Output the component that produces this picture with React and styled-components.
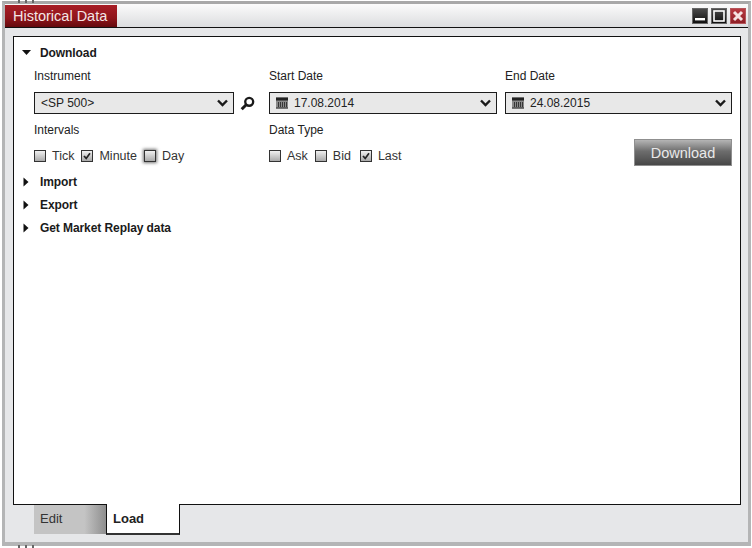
import React from "react";
import styled, { createGlobalStyle } from "styled-components";

const GlobalStyle = createGlobalStyle`
    html, body {
        margin: 0;
        padding: 0;
        background: #ffffff;
    }
    body {
        font-family: "Liberation Sans", Arial, sans-serif;
        color: #222222;
    }
`;

const Page = styled.div`
    position: relative;
    width: 752px;
    height: 548px;
    overflow: hidden;
    padding: 1px 1px 2px 2px;
    box-sizing: border-box;
`;

const Ticks = styled.div`
    position: absolute;
    left: 18px;
    ${(props) => (props.$bottom ? "bottom: 0;" : "top: 0;")}
    width: 16px;
    height: 3px;
    background: repeating-linear-gradient(90deg, #666666 0 2px, transparent 2px 7px);
`;

const Frame = styled.div`
    height: 100%;
    box-sizing: border-box;
    border-style: solid;
    border-color: #b4b5b6;
    border-width: 3px 3px 4px 3px;
    border-top-color: #a8a8a8;
    background: #e6e7e9;
    display: flex;
    flex-direction: column;
`;

const TitleBar = styled.div`
    height: 24px;
    flex: none;
    box-sizing: border-box;
    display: flex;
    align-items: stretch;
    justify-content: space-between;
    background: linear-gradient(#fbfbfb, #dcdddf);
    border-bottom: 1px solid #111111;
`;

const TitleTab = styled.div`
    width: 112px;
    margin-top: 1px;
    display: flex;
    align-items: center;
    padding: 0 0 1px 8px;
    box-sizing: border-box;
    background: linear-gradient(#a81e26, #8f151b 60%, #650a0e);
    color: #f4e6e6;
    font-size: 14.5px;
`;

const WindowButtons = styled.div`
    display: flex;
    gap: 3px;
    padding: 4px 2px 0 0;
`;

const WindowButton = styled.div`
    width: 16px;
    height: 16px;
    box-sizing: border-box;
    border: 1px solid ${(props) => (props.$close ? "#b5555a" : "#666666")};
    background: ${(props) =>
        props.$close
            ? "linear-gradient(#b83a42, #8f1f26)"
            : "linear-gradient(#4a4a4a, #0f0f0f)"};
    display: flex;
    align-items: center;
    justify-content: center;
`;

const Panel = styled.div`
    flex: 1;
    margin: 8px 7px 0 8px;
    border: 1px solid #111111;
    background: #ffffff;
    padding: 4px 8px 0 8px;
    display: flex;
    flex-direction: column;
`;

const SectionHeader = styled.div`
    height: 23px;
    display: flex;
    align-items: center;
    gap: 9px;
    font-size: 12px;
    font-weight: bold;
    letter-spacing: -0.08px;
    color: #1a1a1a;
`;

const Arrow = styled.svg`
    width: 9px;
    height: 10px;
    flex: none;
`;

const FormGrid = styled.div`
    display: grid;
    grid-template-columns: 227px 228px 227px;
    grid-template-rows: 16px 22px 18px 16px;
    column-gap: 8px;
    row-gap: 8px;
    padding: 0 0 6px 12px;
    margin-top: 4px;
`;

const FieldLabel = styled.div`
    font-size: 12px;
    line-height: 16px;
    color: #222222;
`;

const SelectRow = styled.div`
    display: flex;
    align-items: center;
    gap: 6px;
`;

const SelectBox = styled.div`
    flex: ${(props) => (props.$fixed ? "none" : "1")};
    width: ${(props) => (props.$fixed ? "200px" : "auto")};
    height: 22px;
    box-sizing: border-box;
    border: 1px solid #1c1c1c;
    background: #e8e8e8;
    display: flex;
    align-items: center;
    padding: 0 5px 0 6px;
    gap: 6px;
    font-size: 12px;
    color: #222222;
`;

const SelectValue = styled.span`
    flex: 1;
`;

const CheckRow = styled.div`
    display: flex;
    align-items: center;
    height: 16px;
    font-size: 12.5px;
    color: #333333;
`;

const CheckItem = styled.label`
    display: flex;
    align-items: center;
    gap: 6px;
    margin-right: ${(props) => props.$gap}px;
`;

const CheckBox = styled.span`
    width: 12px;
    height: 12px;
    box-sizing: border-box;
    border: 1px solid #333333;
    background: linear-gradient(#f0f0f0, #a9a9a9);
    display: flex;
    align-items: center;
    justify-content: center;
    box-shadow: ${(props) => (props.$focused ? "0 0 3px 1px #777777" : "none")};
`;

const DownloadCell = styled.div`
    grid-column: 3;
    grid-row: 3 / 5;
    display: flex;
    justify-content: flex-end;
    align-items: flex-start;
    margin-top: 17px;
`;

const DownloadButton = styled.button`
    width: 98px;
    height: 27px;
    padding: 0;
    border: 1px solid #8f8f8f;
    background: linear-gradient(#b5b5b5, #6d6d6d 45%, #474747);
    color: #e9e9e9;
    font-family: inherit;
    font-size: 14.5px;
`;

const TabStrip = styled.div`
    height: 37px;
    flex: none;
    display: flex;
    align-items: flex-start;
    padding-left: 29px;
`;

const Tab = styled.div`
    box-sizing: border-box;
    font-size: 13px;
    display: flex;
    align-items: center;
`;

const EditTab = styled(Tab)`
    width: 72px;
    height: 29px;
    padding: 0 0 2px 6px;
    color: #333333;
    background: linear-gradient(90deg, #c4c4c4 70%, #8e8e8e);
`;

const LoadTab = styled(Tab)`
    width: 74px;
    height: 31px;
    margin-top: -1px;
    padding-left: 6px;
    font-weight: bold;
    background: #ffffff;
    color: #222222;
    border: 1px solid #111111;
    border-top: none;
    border-bottom: 2px solid #333333;
`;

const Chevron = () => (
    <svg width="11" height="8" viewBox="0 0 11 8">
        <path d="M1 1.5 L5.5 6 L10 1.5" fill="none" stroke="#1a1a1a" strokeWidth="2.4" />
    </svg>
);

const CalendarIcon = () => (
    <svg width="12" height="12" viewBox="0 0 12 12">
        <rect x="0" y="0.5" width="12" height="11" fill="#8a8a8a" />
        <rect x="0" y="0.5" width="12" height="3" fill="#222222" />
        <rect x="0" y="10.5" width="12" height="1" fill="#333333" />
        <path d="M2.5 5v5M4.5 5v5M6.5 5v5M8.5 5v5M10.5 5v5" stroke="#2c2c2c" strokeWidth="0.9" />
    </svg>
);

const Tick = () => (
    <svg width="8" height="8" viewBox="0 0 8 8">
        <path d="M1 4 L3.2 6.4 L7 1.2" fill="none" stroke="#222222" strokeWidth="1.7" />
    </svg>
);

const SearchIcon = () => (
    <svg width="15" height="15" viewBox="0 0 14 14">
        <circle cx="8.6" cy="5.4" r="3.7" fill="none" stroke="#1a1a1a" strokeWidth="2.2" />
        <path d="M5.8 8.2 L1.6 12.4" stroke="#1a1a1a" strokeWidth="2.8" />
    </svg>
);

const Section = ({ title, open }) => (
    <SectionHeader>
        <Arrow viewBox="0 0 9 10">
            {open ? <path d="M0 2 H9 L4.5 7 Z" fill="#111" /> : <path d="M1.5 0.5 V9.5 L6.5 5 Z" fill="#111" />}
        </Arrow>
        {title}
    </SectionHeader>
);

const Check = ({ label, checked, focused, gap }) => (
    <CheckItem $gap={gap}>
        <CheckBox $focused={focused}>{checked && <Tick />}</CheckBox>
        {label}
    </CheckItem>
);

const App = () => (
    <>
        <GlobalStyle />
        <Page>
            <Ticks />
            <Ticks $bottom />
            <Frame>
                <TitleBar>
                    <TitleTab>Historical Data</TitleTab>
                    <WindowButtons>
                        <WindowButton>
                            <svg width="12" height="12" viewBox="0 0 12 12">
                                <rect x="1" y="8" width="10" height="2.4" fill="#fff" />
                            </svg>
                        </WindowButton>
                        <WindowButton>
                            <svg width="12" height="12" viewBox="0 0 12 12">
                                <rect x="1" y="1" width="10" height="10" fill="none" stroke="#fff" strokeWidth="1.6" />
                            </svg>
                        </WindowButton>
                        <WindowButton $close>
                            <svg width="12" height="12" viewBox="0 0 12 12">
                                <path d="M2 2 L10 10 M10 2 L2 10" stroke="#f6e2e2" strokeWidth="3" />
                            </svg>
                        </WindowButton>
                    </WindowButtons>
                </TitleBar>
                <Panel>
                    <Section title="Download" open />
                    <FormGrid>
                        <FieldLabel>Instrument</FieldLabel>
                        <FieldLabel>Start Date</FieldLabel>
                        <FieldLabel>End Date</FieldLabel>
                        <SelectRow>
                            <SelectBox $fixed>
                                <SelectValue>&lt;SP 500&gt;</SelectValue>
                                <Chevron />
                            </SelectBox>
                            <SearchIcon />
                        </SelectRow>
                        <SelectBox>
                            <CalendarIcon />
                            <SelectValue>17.08.2014</SelectValue>
                            <Chevron />
                        </SelectBox>
                        <SelectBox>
                            <CalendarIcon />
                            <SelectValue>24.08.2015</SelectValue>
                            <Chevron />
                        </SelectBox>
                        <FieldLabel>Intervals</FieldLabel>
                        <FieldLabel>Data Type</FieldLabel>
                        <DownloadCell>
                            <DownloadButton>Download</DownloadButton>
                        </DownloadCell>
                        <CheckRow>
                            <Check label="Tick" gap={7} />
                            <Check label="Minute" checked gap={7} />
                            <Check label="Day" focused gap={0} />
                        </CheckRow>
                        <CheckRow>
                            <Check label="Ask" gap={7} />
                            <Check label="Bid" gap={9} />
                            <Check label="Last" checked gap={0} />
                        </CheckRow>
                    </FormGrid>
                    <Section title="Import" />
                    <Section title="Export" />
                    <Section title="Get Market Replay data" />
                </Panel>
                <TabStrip>
                    <EditTab>Edit</EditTab>
                    <LoadTab>Load</LoadTab>
                </TabStrip>
            </Frame>
        </Page>
    </>
);

export default App;
